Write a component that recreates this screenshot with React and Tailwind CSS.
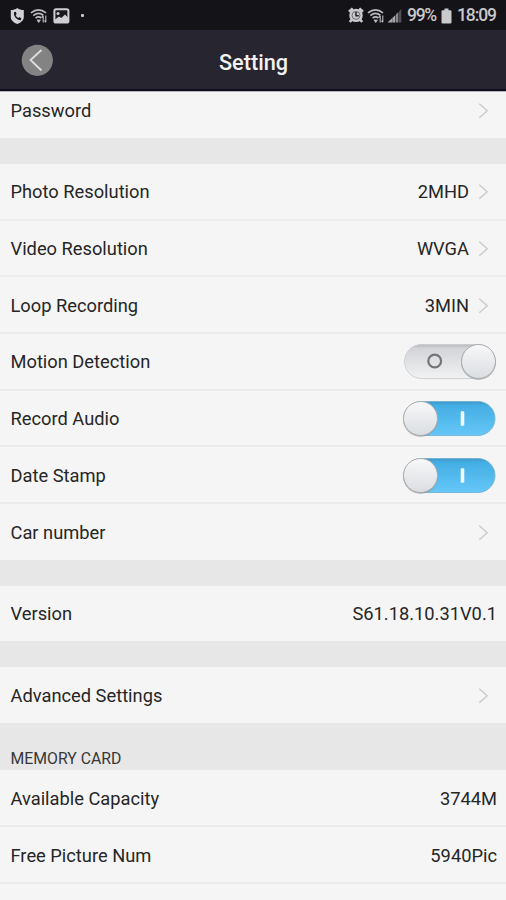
import React from "react";

function Chevron() {
  return (
    <svg className="mr-[8px] ml-[9px] block" width="11" height="18" viewBox="0 0 11 18" fill="none">
      <path d="M1.3 1.8L9.2 8.8L1.3 15.8" stroke="#cccccc" strokeWidth="1.5" />
    </svg>
  );
}

function Toggle({ on, id }) {
  return (
    <svg className="-mr-px block" width="96" height="40" viewBox="0 0 96 40">
      <defs>
        <linearGradient id={id + "t"} x1="0" y1="0" x2="0" y2="1">
          <stop offset="0" stopColor={on ? "#3d97c8" : "#b9bcbf"} />
          <stop offset="0.12" stopColor={on ? "#44aee4" : "#d3d5d8"} />
          <stop offset="1" stopColor={on ? "#66c7f8" : "#f1f2f3"} />
        </linearGradient>
        <linearGradient id={id + "k"} x1="0" y1="0" x2="0" y2="1">
          <stop offset="0" stopColor="#f8f8f9" />
          <stop offset="1" stopColor="#dadde1" />
        </linearGradient>
      </defs>
      <rect x="2.5" y="2.5" width="90.5" height="34" rx="17" fill={`url(#${id}t)`} stroke={on ? "#70afd0" : "#c6c8ca"} strokeWidth="0.8" />
      {on ? (
        <rect x="58.7" y="12.2" width="3.6" height="14.5" rx="0.8" fill="#f0faff" />
      ) : (
        <circle cx="32.7" cy="19" r="6.4" fill="none" stroke="#737679" strokeWidth="2.2" />
      )}
      <circle cx={on ? 18.5 : 76.5} cy="20.4" r="17.5" fill="#8e9194" opacity="0.55" />
      <circle cx={on ? 18.5 : 76.5} cy="19.5" r="17" fill={`url(#${id}k)`} stroke="#a8abae" strokeWidth="1" />
    </svg>
  );
}

function Row({ label, value, arrow, toggle, last, low }) {
  return (
    <div
      className={`flex shrink-0 items-center justify-between bg-[#f5f5f5] pr-[9px] pl-[10.5px] ${
        last ? "h-[55.5px]" : "h-[56.7px] border-b-2 border-[#ebebeb]"
      } ${low ? "pt-[4px]" : "pt-[2px]"}`}
    >
      <span>{label}</span>
      <div className="flex items-center">
        {value && <span>{value}</span>}
        {arrow && <Chevron />}
        {toggle && <Toggle on={toggle === "on"} id={label.slice(0, 3)} />}
      </div>
    </div>
  );
}

function Wifi() {
  return (
    <svg className="block" width="18" height="16" viewBox="0 0 18 16" fill="none" stroke="#bcbcbe" strokeWidth="1.7">
      <path d="M1 4.8Q8.5 -1.2 16 4.8M3.3 7.6Q8.5 3.4 13.4 7.4M5.6 10.2Q8.5 7.8 11.3 10" />
      <path d="M7 12L8.7 14.5L10.4 12Z" fill="#bcbcbe" strokeWidth="0.8" />
      <path d="M13.2 14.5V8M11.6 9.7L13.2 7.7M15.8 7.5V14M14.5 12.6L15.8 14.4" strokeWidth="1.1" />
    </svg>
  );
}

function StatusBar() {
  return (
    <div className="flex h-[30px] shrink-0 items-center justify-between bg-[#141318] pt-px pr-[10px] pl-[10px] text-[#c8c8ca]">
      <div className="flex items-center">
        <svg className="block" width="15" height="18" viewBox="0 0 15 18">
          <path d="M7.3 1C9 2.6 11.4 3 13.8 3V10C13.8 13.5 10.5 15.8 7.3 17C4 15.8 .8 13.5 .8 10V3C3.2 3 5.6 2.6 7.3 1Z" fill="#d2d2d4" />
          <path d="M4 5.2L5.7 4.7L6.6 7L5.7 8.2Q6.5 10.1 8.3 11L9.5 10.1L11.4 11.5L10.6 13.2Q7.8 13.5 5.5 10.8Q3.3 8 4 5.2Z" fill="#17161b" />
        </svg>
        <div className="ml-[5px]"><Wifi /></div>
        <svg className="ml-[5px] block" width="17" height="16" viewBox="0 0 17 16">
          <rect x="1.4" y="1.2" width="14" height="13.3" rx="1.6" fill="#1a191e" stroke="#cfcfd1" strokeWidth="2" />
          <path d="M2 11.5L6 8.5L8.3 10L12 6.5L15 9.5V14H2Z" fill="#cfcfd1" />
          <circle cx="5" cy="5.4" r="1.5" fill="#cfcfd1" />
        </svg>
        <span className="ml-[11px] h-[3px] w-[3px] rounded-[1px] bg-[#c8c8ca]" />
      </div>
      <div className="flex items-center">
        <svg className="block" width="16" height="17" viewBox="0 0 16 17">
          <path d="M1 4.8L4.7 1.4M15 4.8L11.3 1.4M3.8 12.6L1.8 15M12.2 12.6L14.2 15" stroke="#cacacc" strokeWidth="2.6" />
          <circle cx="8" cy="8.4" r="6.7" fill="#cacacc" />
          <circle cx="8" cy="8.4" r="4" fill="#cacacc" stroke="#55545a" strokeWidth="0.8" />
          <path d="M8 5V8.8H10.8" stroke="#222127" strokeWidth="1.5" fill="none" />
        </svg>
        <div className="ml-[3px]"><Wifi /></div>
        <svg className="ml-[2px] block" width="15" height="15" viewBox="0 0 15 15">
          <path d="M.5 14.5L5 10.2V14.5Z" fill="#a8a8aa" />
          <path d="M5.3 9.9L8.4 6.9V14.5H5.3Z" fill="#a8a8aa" />
          <path d="M9 6.3L11.4 4V14.5H9Z" fill="#88888b" />
          <path d="M12 3.4L14.3 1V14.5H12Z" fill="#515156" />
        </svg>
        <span className="ml-[5px] w-[31px] whitespace-nowrap text-[17.5px] leading-none font-medium tracking-[-1.3px]">99%</span>
        <svg className="ml-[3px] block" width="11" height="16" viewBox="0 0 11 16">
          <path d="M3.5 .5H7.5V2.3H9.5Q10.5 2.3 10.5 3.3V14.5Q10.5 15.5 9.5 15.5H1.5Q.5 15.5 .5 14.5V3.3Q.5 2.3 1.5 2.3H3.5Z" fill="#cacacc" />
        </svg>
        <span className="ml-[5px] w-[39px] whitespace-nowrap text-[17.5px] leading-none font-medium tracking-[-1.1px]">18:09</span>
      </div>
    </div>
  );
}

export default function App() {
  return (
    <div className="flex h-[900px] w-[506px] flex-col overflow-hidden bg-[#e7e7e7] font-[Roboto,sans-serif] text-[18.3px] leading-none text-[#262626]">
      <StatusBar />
      <header className="grid h-[61px] shrink-0 grid-cols-[100px_1fr_100px] items-center border-b-2 border-[#12101f] bg-[#272530]">
        <svg className="mt-[2px] ml-[21px] block" width="33" height="33" viewBox="0 0 33 33">
          <circle cx="16.3" cy="16.3" r="15.6" fill="#838383" />
          <path d="M20.5 6L9.5 16L20.5 26.5" fill="none" stroke="#dedede" strokeWidth="1.8" />
        </svg>
        <h1 className="pt-[6px] pl-px text-center text-[21.7px] font-medium text-[#f2f2f2]">Setting</h1>
      </header>
      <div className="flex h-[47px] shrink-0 items-center justify-between border-t border-[#b5b5b8] bg-[#f5f5f5] pr-[9px] pb-[8px] pl-[10.5px]">
        <span>Password</span>
        <Chevron />
      </div>
      <div className="mt-[26px] shrink-0">
        <Row label="Photo Resolution" value="2MHD" arrow />
        <Row label="Video Resolution" value="WVGA" arrow />
        <Row label="Loop Recording" value="3MIN" arrow />
        <Row label="Motion Detection" toggle="off" />
        <Row label="Record Audio" toggle="on" />
        <Row label="Date Stamp" toggle="on" />
        <Row label="Car number" arrow last />
      </div>
      <div className="mt-[26px] shrink-0">
        <Row label="Version" value="S61.18.10.31V0.1" last />
      </div>
      <div className="mt-[26px] shrink-0">
        <Row label="Advanced Settings" arrow last />
      </div>
      <div className="flex h-[47.5px] shrink-0 items-end pb-[3px] pl-[10.5px] text-[15.8px] text-[#383838]">MEMORY CARD</div>
      <Row label="Available Capacity" value="3744M" low />
      <Row label="Free Picture Num" value="5940Pic" low />
      <Row label="" />
    </div>
  );
}
